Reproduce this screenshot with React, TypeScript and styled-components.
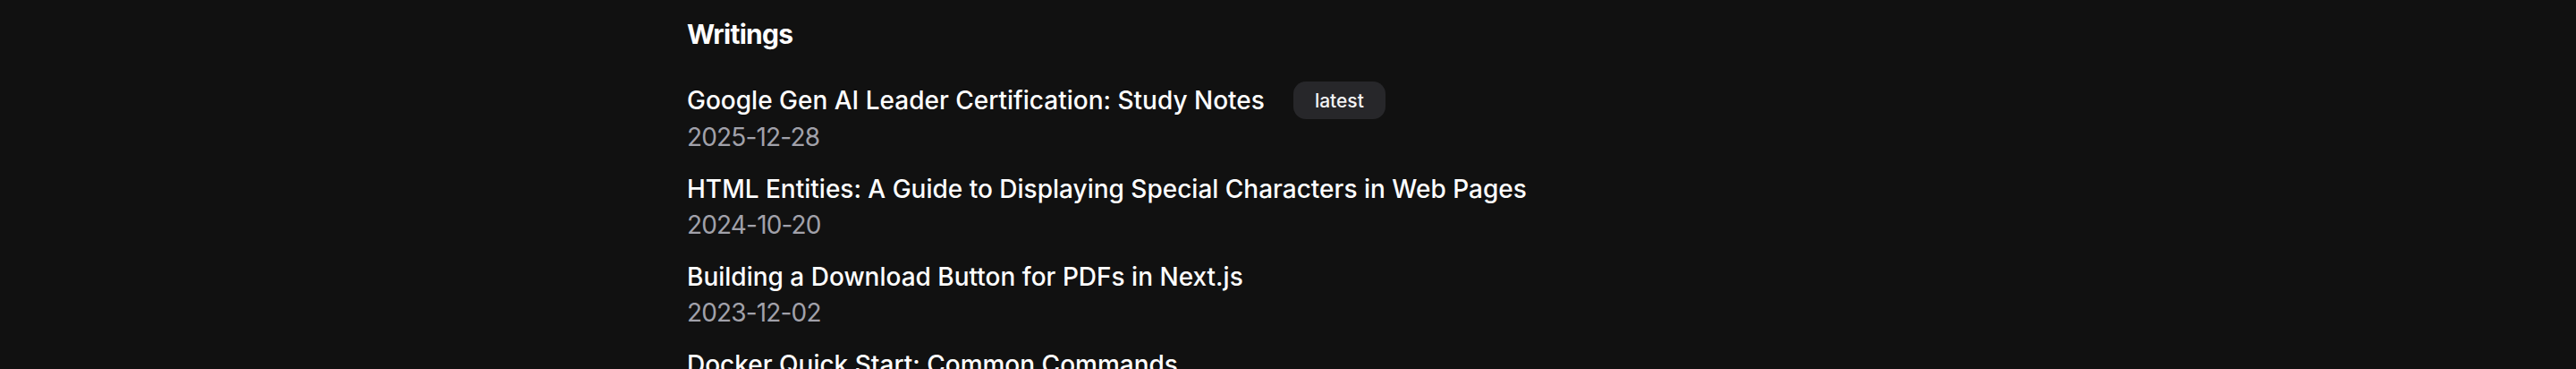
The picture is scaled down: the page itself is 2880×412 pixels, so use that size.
import styled, { createGlobalStyle } from 'styled-components';

const GlobalStyle = createGlobalStyle`
  html, body {
    margin: 0;
    padding: 0;
    background: #111111;
  }
  body {
    font-family: Inter, "Noto Sans", sans-serif;
    color: #f4f4f5;
    -webkit-font-smoothing: antialiased;
  }
`;

const Page = styled.main`
  max-width: 1344px;
  margin: 0 auto;
  padding-top: 18px;
`;

const Heading = styled.h2`
  margin: 0 0 33px;
  font-size: 30px;
  line-height: 40px;
  font-weight: 700;
  letter-spacing: -0.025em;
  color: #ffffff;
`;

const PostList = styled.ul`
  list-style: none;
  margin: 0;
  padding: 0;
  display: flex;
  flex-direction: column;
  gap: 18px;
`;

const Post = styled.li`
  display: flex;
  flex-direction: column;
`;

const TitleRow = styled.div`
  display: flex;
  align-items: center;
  gap: 32px;
`;

const Title = styled.a`
  font-size: 28px;
  line-height: 40px;
  font-weight: 500;
  letter-spacing: 0;
  color: #ffffff;
  text-decoration: none;
`;

const Badge = styled.span`
  display: inline-flex;
  align-items: center;
  justify-content: center;
  height: 42px;
  padding: 0 24px;
  border-radius: 14px;
  background: #27272a;
  color: #f4f4f5;
  font-size: 21px;
  font-weight: 500;
`;

const PostDate = styled.time`
  font-size: 28px;
  line-height: 40px;
  font-weight: 400;
  letter-spacing: -0.03em;
  color: #a1a1aa;
`;

type PostItem = {
  title: string;
  date: string;
  latest?: boolean;
};

const posts: PostItem[] = [
  { title: 'Google Gen AI Leader Certification: Study Notes', date: '2025-12-28', latest: true },
  { title: 'HTML Entities: A Guide to Displaying Special Characters in Web Pages', date: '2024-10-20' },
  { title: 'Building a Download Button for PDFs in Next.js', date: '2023-12-02' },
  { title: 'Docker Quick Start: Common Commands', date: '2023-08-14' },
];

const App = () => {
  return (
    <>
      <GlobalStyle />
      <Page>
        <Heading>Writings</Heading>
        <PostList>
          {posts.map((post) => (
            <Post key={post.title}>
              <TitleRow>
                <Title href="#">{post.title}</Title>
                {post.latest && <Badge>latest</Badge>}
              </TitleRow>
              <PostDate dateTime={post.date}>{post.date}</PostDate>
            </Post>
          ))}
        </PostList>
      </Page>
    </>
  );
};

export default App;
